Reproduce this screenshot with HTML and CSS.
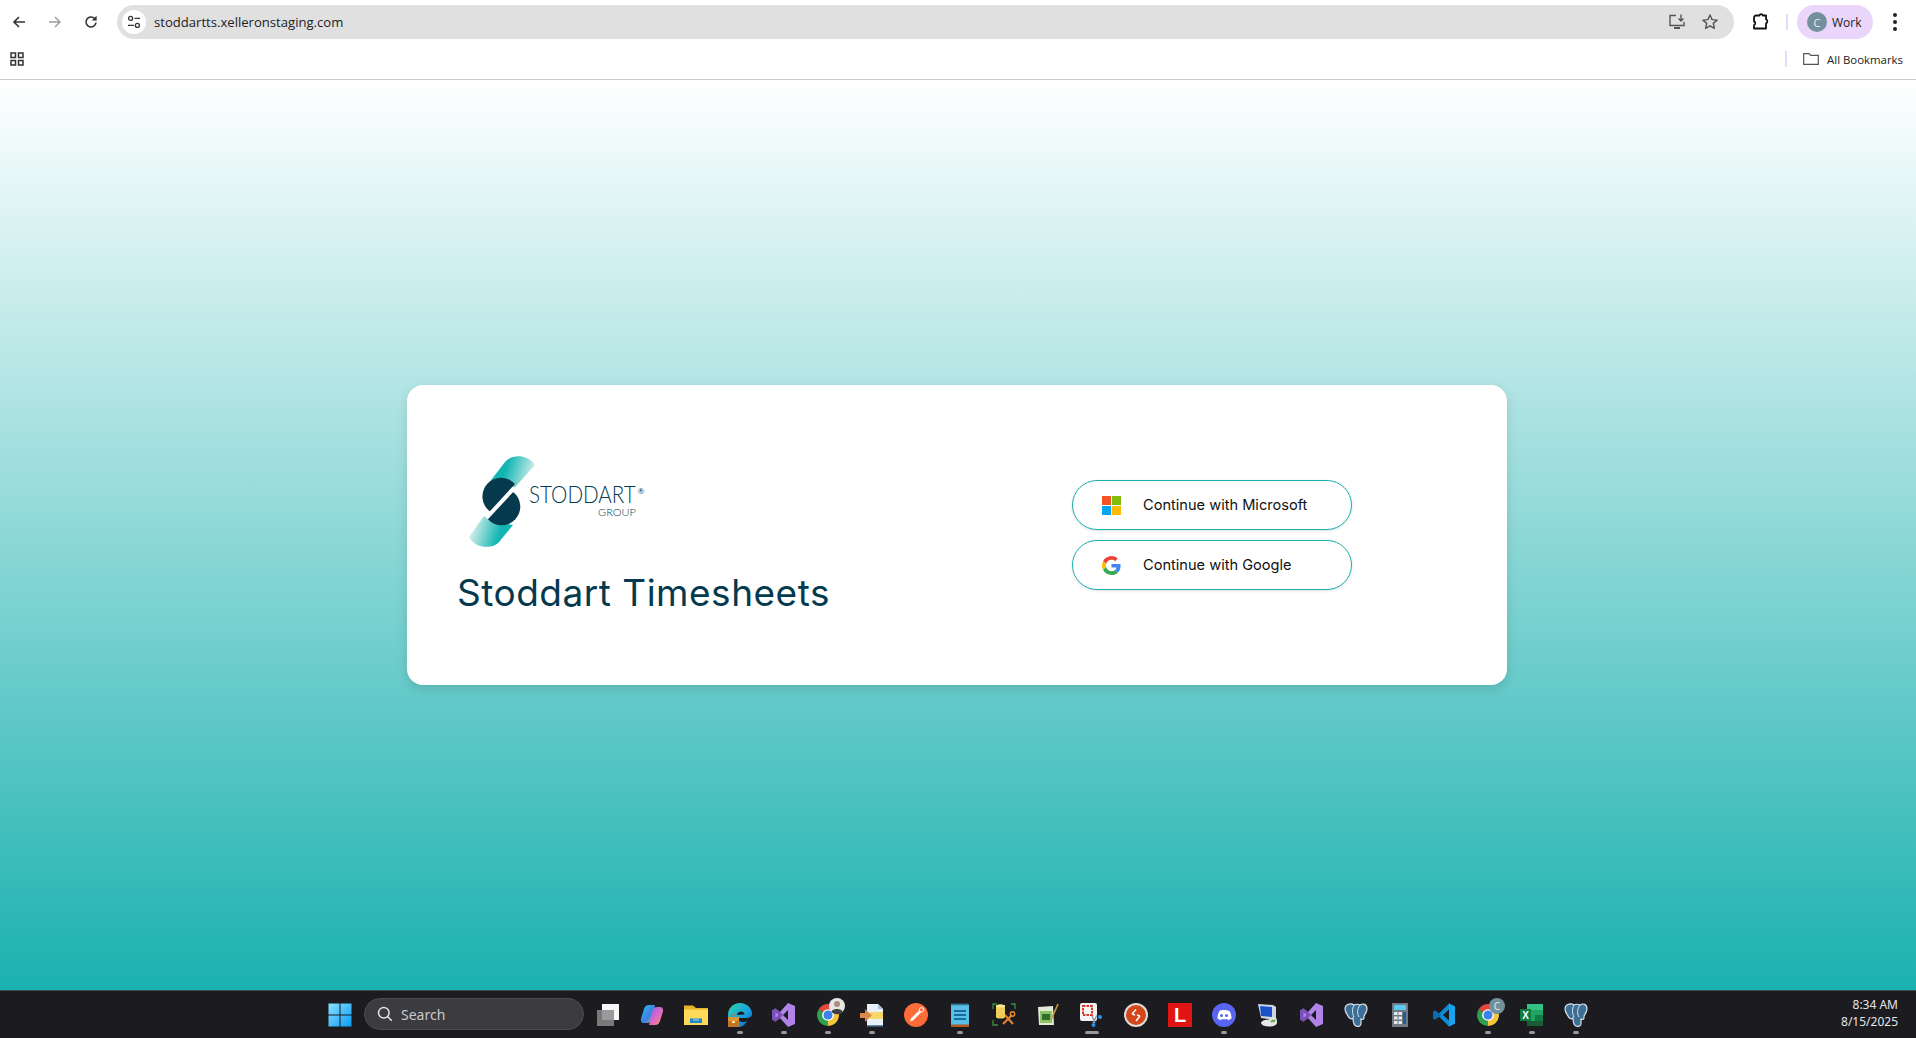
FILE: index.html
```html
<!DOCTYPE html>
<html lang="en">
<head>
    <meta charset="UTF-8">
    <meta name="viewport" content="width=device-width, initial-scale=1.0">
    <title>Stoddart Timesheets</title>
    <link rel="stylesheet" href="styles.css">
</head>
<body>
    <div class="toolbar">
        <button class="nav-btn nav-back"><svg width="16" height="16" viewBox="0 0 16 16"><path d="M14 8H3M8 3 3 8l5 5" fill="none" stroke="#333" stroke-width="1.6"/></svg></button>
        <button class="nav-btn nav-forward"><svg width="16" height="16" viewBox="0 0 16 16"><path d="M2 8h11M8 3l5 5-5 5" fill="none" stroke="#9a9a9a" stroke-width="1.4"/></svg></button>
        <button class="nav-btn nav-reload"><svg width="16" height="16" viewBox="0 0 16 16"><path d="M13 8.5A5 5 0 1 1 11.5 4.4L13 6" fill="none" stroke="#333" stroke-width="1.6"/><path d="M13.6 1.8v4.8H8.8z" fill="#333"/></svg></button>
        <div class="omnibox">
            <span class="site-chip"><svg width="14" height="14" viewBox="0 0 14 14"><circle cx="3.6" cy="3.4" r="2" fill="none" stroke="#333" stroke-width="1.3"/><path d="M7.5 3.4h5.5M1 10.4h6" stroke="#333" stroke-width="1.3"/><circle cx="10.4" cy="10.4" r="2" fill="none" stroke="#333" stroke-width="1.3"/></svg></span>
            <span class="url">stoddartts.xelleronstaging.com</span>
            <span class="omni-icons">
                <svg width="18" height="18" viewBox="0 0 18 18"><path d="M8 2.5H2v10h14V9" fill="none" stroke="#555" stroke-width="1.4"/><path d="M13 1.500v6M10.500 5.500 13 8l2.500-2.500" fill="none" stroke="#555" stroke-width="1.4"/><path d="M6 14h6v2H6z" fill="#555"/></svg>
                <svg width="18" height="18" viewBox="0 0 18 18"><path d="m9 2 2.100 4.600 5 .5-3.800 3.300 1.100 4.900L9 12.800l-4.400 2.500 1.100-4.900L1.900 7.100l5-.5z" fill="none" stroke="#555" stroke-width="1.400" stroke-linejoin="round"/></svg>
            </span>
        </div>
        <button class="nav-btn nav-ext"><svg width="18" height="18" viewBox="0 0 18 18"><path d="M5 2.500h3.500c.3-1.800 3-1.800 3.300 0H15v3.800c1.800.3 1.800 3.700 0 4V15.500H3v-3.300c1.700-.3 1.700-3.400 0-3.700V4.500c0-1 1-2 2-2z" fill="none" stroke="#111" stroke-width="1.800" stroke-linejoin="round"/></svg></button>
        <span class="divider"></span>
        <div class="profile"><span class="avatar">C</span><span>Work</span></div>
        <div class="menu-dots"><i></i><i></i><i></i></div>
    </div>

    <div class="bookmarks">
        <svg class="apps-icon" width="14" height="14" viewBox="0 0 14 14"><path d="M1 1h4.500v4.500H1zM8.500 1H13v4.500H8.500zM1 8.500h4.500V13H1zM8.500 8.500H13V13H8.500z" fill="none" stroke="#333" stroke-width="1.500"/></svg>
        <span class="divider"></span>
        <div class="all-bookmarks">
            <svg width="16" height="12" viewBox="0 0 16 12"><path d="M.7.7h5.500l1.500 1.600h7.600v9H.7z" fill="none" stroke="#555" stroke-width="1.200"/></svg>
            <span>All Bookmarks</span>
        </div>
    </div>

    <main class="page">
        <section class="card">
            <div class="brand">
                <svg class="logo" width="190" height="100" viewBox="60 60 570 300" role="img" aria-label="Stoddart Group logo">
                    <defs>
                        <linearGradient id="bandTop" x1="205" y1="100" x2="285" y2="125" gradientUnits="userSpaceOnUse"><stop offset="0" stop-color="#12b5b1"/><stop offset="1" stop-color="#d2eeec"/></linearGradient>
                        <linearGradient id="bandBottom" x1="95" y1="310" x2="175" y2="335" gradientUnits="userSpaceOnUse"><stop offset="0" stop-color="#d2eeec"/><stop offset="1" stop-color="#12b5b1"/></linearGradient>
                    </defs>
                    <path d="M150 158 198 96C215 74 265 70 288 105L228 172z" fill="url(#bandTop)"/>
                    <path d="M135 258 90 320C105 355 165 362 185 330L222 285 150 270z" fill="url(#bandBottom)"/>
                    <path d="M228 162A56 56 0 1 0 152.500 244z" fill="#05394e"/>
                    <path d="M222.500 186A56 56 0 1 1 146.700 268z" fill="#05394e"/>
                    <text class="logo-name" x="270" y="220" textLength="320" lengthAdjust="spacingAndGlyphs">STODDART</text>
                    <text class="logo-mark" x="596" y="192">®</text>
                    <text class="logo-group" x="477" y="257" textLength="114" lengthAdjust="spacingAndGlyphs">GROUP</text>
                </svg>
                <h1 class="app-title">Stoddart Timesheets</h1>
            </div>
            <div class="auth">
                <button class="auth-btn">
                    <svg class="auth-icon" width="19" height="19" viewBox="0 0 19 19"><path d="M0 0h9v9H0z" fill="#f35325"/><path d="M10 0h9v9h-9z" fill="#81bc06"/><path d="M0 10h9v9H0z" fill="#05a6f0"/><path d="M10 10h9v9h-9z" fill="#ffba08"/></svg>
                    <span>Continue with Microsoft</span>
                </button>
                <button class="auth-btn">
                    <svg class="auth-icon" width="19" height="19" viewBox="0 0 48 48"><path fill="#EA4335" d="M24 9.500c3.540 0 6.710 1.220 9.210 3.600l6.850-6.850C35.900 2.380 30.470 0 24 0 14.620 0 6.510 5.380 2.560 13.220l7.980 6.190C12.430 13.720 17.740 9.500 24 9.500z"/><path fill="#4285F4" d="M46.980 24.550c0-1.570-.15-3.090-.38-4.550H24v9.020h12.940c-.58 2.960-2.260 5.480-4.780 7.180l7.730 6c4.510-4.180 7.090-10.360 7.090-17.650z"/><path fill="#FBBC05" d="M10.530 28.590c-.48-1.450-.76-2.990-.76-4.590s.27-3.140.76-4.590l-7.980-6.190C.92 16.460 0 20.120 0 24c0 3.880.92 7.540 2.560 10.780l7.970-6.190z"/><path fill="#34A853" d="M24 48c6.480 0 11.930-2.130 15.890-5.810l-7.730-6c-2.150 1.450-4.920 2.300-8.160 2.300-6.260 0-11.570-4.220-13.470-9.910l-7.980 6.190C6.510 42.620 14.620 48 24 48z"/></svg>
                    <span>Continue with Google</span>
                </button>
            </div>
        </section>
    </main>

    <footer class="taskbar">
        <div class="task-start">
            <svg width="24" height="24" viewBox="0 0 24 24">
                <defs><linearGradient id="winBlue" x1="0" y1="0" x2="1" y2="1"><stop offset="0" stop-color="#8ae0ff"/><stop offset="1" stop-color="#0a9cf5"/></linearGradient></defs>
                <path d="M.5.500h11v11H.5zM12.500.500h11v11h-11zM.5 12.500h11v11H.5zM12.500 12.500h11v11h-11z" fill="url(#winBlue)"/>
            </svg>
        </div>
        <div class="search-box">
            <svg width="16" height="16" viewBox="0 0 16 16"><circle cx="6.800" cy="6.800" r="5.300" fill="none" stroke="#e4e4e4" stroke-width="1.500"/><path d="m10.800 10.800 4 4" stroke="#e4e4e4" stroke-width="1.500"/></svg>
            <span>Search</span>
        </div>
        <div class="task-icons">
            <div class="task-item"><svg width="24" height="24" viewBox="0 0 24 24"><path d="M6 1h17v16H6z" fill="#f7f7f7"/><path d="M1 7h17v16H1z" fill="#8a8a8a" fill-opacity=".85"/></svg><i class="no-dot"></i></div>
            <div class="task-item"><svg width="24" height="24" viewBox="0 0 24 24"><defs><linearGradient id="copA" x1="0" y1="0" x2="1" y2="1"><stop offset="0" stop-color="#27c1e8"/><stop offset=".6" stop-color="#3f7de8"/><stop offset="1" stop-color="#9ad24c"/></linearGradient><linearGradient id="copB" x1="0" y1="0" x2="1" y2="1"><stop offset="0" stop-color="#8d62e8"/><stop offset=".6" stop-color="#e56bc0"/><stop offset="1" stop-color="#f6a04d"/></linearGradient></defs><path d="M9 2h6l-3 13c-.8 3-2 5-5 5H4c-3 0-3.500-2.500-2.800-5L4 6c1-3 2.500-4 5-4z" fill="url(#copA)"/><path d="M15 22H9l3-13c.8-3 2-5 5-5h3c3 0 3.500 2.500 2.800 5L20 18c-1 3-2.500 4-5 4z" fill="url(#copB)"/></svg><i class="no-dot"></i></div>
            <div class="task-item"><svg width="24" height="24" viewBox="0 0 24 24"><path d="M0 2.500h9l3 2.500h12v17H0z" fill="#e8b32a"/><path d="M0 6.500h24V22H0z" fill="#fddc5c"/><path d="M6 15.500h12v4.500H6z" fill="#1d84c9"/><path d="M9 17h6" stroke="#8fd0f2" stroke-width="1.200"/></svg><i class="no-dot"></i></div>
            <div class="task-item"><svg width="24" height="24" viewBox="0 0 24 24"><defs><linearGradient id="edgeA" x1="0" y1="0" x2="1" y2="1"><stop offset="0" stop-color="#2bd6a8"/><stop offset=".6" stop-color="#1b9de2"/><stop offset="1" stop-color="#0c5da8"/></linearGradient></defs><path d="M12 0c7 0 12 5 12 11 0 3-3 4-6 4H9c.4 2.500 3 4 6 4 2 0 3-.5 4-1-2 4-5 6-8 6-6 0-11-5-11-12S5 0 12 0z" fill="url(#edgeA)"/><path d="M9 12c0-2 2-3.500 4-3.500s3.500 1 3.500 3z" fill="#1c1c22"/><path d="M0 14h11v10H0z" fill="#c0762a"/><path d="M0 14h11v4H0z" fill="#dd9233"/><path d="M4 18h3v2H4z" fill="#ffe18f"/><path d="M3.500 14v-2h4v2" fill="none" stroke="#c0762a"/></svg><i class="dot"></i></div>
            <div class="task-item"><svg width="24" height="24" viewBox="0 0 24 24"><path fill-rule="evenodd" d="M16 0l7 3v18l-7 3L8 15 3.500 18.500 0 16.500v-9l3.500-2L8 9zM16 7l-5 5 5 5z" fill="#b283e6"/><path d="M0 7.500l3.500-2L8 9l3 3-3 3-4.500 3.500-3.500-2zM3.500 9v6l3-3z" fill="#7a4fb8" fill-rule="evenodd"/></svg><i class="dot"></i></div>
            <div class="task-item chrome-photo"><svg class="icon-over" width="24" height="24" viewBox="0 0 24 24"><path d="M12 12 2.500 6.500a11 11 0 0 1 19 0z" fill="#e2483c"/><path d="M12 12l9.500-5.500A11 11 0 0 1 12 23z" fill="#f5c63b"/><path d="M12 12v11A11 11 0 0 1 2.500 6.500z" fill="#2fa04f"/><circle cx="12" cy="12" r="5.800" fill="#fff"/><circle cx="12" cy="12" r="4.500" fill="#3b82ed"/><circle cx="21" cy="3" r="8" fill="#e8e6e4"/><circle cx="21" cy="1" r="3" fill="#a88f7e"/><path d="M15.500 9c0-4 11-4 11 0a8 8 0 0 1-11 0z" fill="#3c3f44"/></svg><i class="dot"></i></div>
            <div class="task-item"><svg width="24" height="24" viewBox="0 0 24 24"><path d="M7 1h11l5 5v16H7z" fill="#e9f1f8"/><path d="M18 1v5h5z" fill="#9cc4e4"/><path d="M10 9h13v7H10z" fill="#f9d66a"/><path d="M7 22h16v1.500H7z" fill="#5d88ad"/><path d="M0 10h5V6l7 6.500L5 19v-4H0z" fill="#de8a46"/></svg><i class="dot"></i></div>
            <div class="task-item"><svg width="24" height="24" viewBox="0 0 24 24"><circle cx="12" cy="12" r="12" fill="#ff6c37"/><path d="M6 18.500l1-3 8-8 2 2-8 8z" fill="#fff"/><circle cx="17.500" cy="6.800" r="2.200" fill="none" stroke="#fff" stroke-width="1"/></svg><i class="no-dot"></i></div>
            <div class="task-item"><svg width="24" height="24" viewBox="0 0 24 24"><path d="M3 1.500h18V22H3z" fill="#59bfe6"/><path d="M3 21.500h18v2.500H3z" fill="#b05a22"/><path d="M6 7h12v2H6zM6 11h12v2H6zM6 15h12v2H6z" fill="#1a6c9c"/><path d="M4 0v3M7 0v3M10 0v3M13 0v3M16 0v3M19 0v3" stroke="#2f86b7"/></svg><i class="dot"></i></div>
            <div class="task-item"><svg width="24" height="24" viewBox="0 0 24 24"><path d="M4 3c0-2 9-2 9 0v11c0 2-9 2-9 0z" fill="#f2cd5c"/><ellipse cx="8.500" cy="3" rx="4.500" ry="1.500" fill="#fbe59b"/><path d="M1 6V1h4M19 1h4v5M1 17v5h5" fill="none" stroke="#3e8e41" stroke-width="1.300"/><path d="M11 21l9-9M13 12l8 9" stroke="#e8872b" stroke-width="2"/><circle cx="20.500" cy="11" r="2.200" fill="none" stroke="#e8872b" stroke-width="1.400"/></svg><i class="no-dot"></i></div>
            <div class="task-item"><svg width="24" height="24" viewBox="0 0 24 24"><path d="M2 4 17 3l1 19H3z" fill="#e3ead7"/><path d="M4 8h12v12H4z" fill="#8fc267"/><path d="M6 11h8v6H6z" fill="#2c6f2e"/><path d="M15 17 22 1" stroke="#c79a3b" stroke-width="1.600"/></svg><i class="no-dot"></i></div>
            <div class="task-item"><svg class="icon-over" width="24" height="24" viewBox="0 0 24 24"><rect x="0" y="0" width="17" height="18" rx="2" fill="#f4f4f4"/><path d="M3 3h9v9H3z" fill="none" stroke="#d9362c" stroke-width="2" stroke-dasharray="2.500 1"/><path d="M12 13l3 7M17 12l-4 8" stroke="#8a97a6" stroke-width="1.400"/><circle cx="20" cy="14" r="2" fill="#2f8fe0"/><circle cx="13.500" cy="22" r="2" fill="#2f8fe0"/></svg><i class="dot dot-wide"></i></div>
            <div class="task-item"><svg width="24" height="24" viewBox="0 0 24 24"><circle cx="12" cy="12" r="11" fill="#d4471b" stroke="#dcdcdc" stroke-width="2"/><path d="M12 6.500 8 11M8 11l3 1M16 13l-4 5M16 13l-3-1" stroke="#fff" stroke-width="1.500" fill="none"/></svg><i class="no-dot"></i></div>
            <div class="task-item"><span class="lm-icon">L</span><i class="no-dot"></i></div>
            <div class="task-item"><svg width="24" height="24" viewBox="0 0 24 24"><circle cx="12" cy="12" r="12" fill="#5865f2"/><path d="M6.500 8c3-1.500 8-1.500 11 0 1.500 2.500 2 5 2 7.500-1 .8-2.200 1.300-3.500 1.700l-.8-1.300c-2 .5-3.400.5-5.400 0l-.8 1.300c-1.300-.4-2.500-.9-3.500-1.700 0-2.500.5-5 2-7.500z" fill="#fff"/><circle cx="9.500" cy="12.500" r="1.500" fill="#5865f2"/><circle cx="14.500" cy="12.500" r="1.500" fill="#5865f2"/></svg><i class="dot"></i></div>
            <div class="task-item"><svg width="24" height="24" viewBox="0 0 24 24"><path d="M2 1 17 2l3 2v13L5 15z" fill="#cfd6e3"/><path d="M4 3l12 1v10L5 13z" fill="#1b52c9"/><ellipse cx="13" cy="20" rx="8" ry="3.500" fill="#e8e8e8"/><circle cx="17" cy="18" r="4" fill="#dfe7d8"/><path d="M15 19l2-2M19 17l-2 2" stroke="#3f9b46" stroke-width="1.200"/></svg><i class="no-dot"></i></div>
            <div class="task-item"><svg width="24" height="24" viewBox="0 0 24 24"><path fill-rule="evenodd" d="M16 0l7 3v18l-7 3L8 15 3.500 18.500 0 16.500v-9l3.500-2L8 9zM16 7l-5 5 5 5z" fill="#b283e6"/><path d="M0 7.500l3.500-2L8 9l3 3-3 3-4.500 3.500-3.500-2zM3.500 9v6l3-3z" fill="#7a4fb8" fill-rule="evenodd"/></svg><i class="no-dot"></i></div>
            <div class="task-item"><svg width="24" height="24" viewBox="0 0 24 24"><path d="M1 6c0-5 6-6 9-4 2-1 4-1 6 0 3-2 7-1 7 4 0 3-2 5-3 7v2c0 1-1 2-3 1v5c0 2-3 3-5 2s-3-4-3-8c-2 2-4 0-5-2S1 9 1 6z" fill="#3d6f96" stroke="#d7e3ec" stroke-width="1.200"/><path d="M10 2c-2 4-2 8 0 12M16 2c-3 4-3 9-1 12" fill="none" stroke="#d7e3ec"/></svg><i class="no-dot"></i></div>
            <div class="task-item"><svg width="24" height="24" viewBox="0 0 24 24"><path d="M4 0h16v24H4z" fill="#6f7a82"/><path d="M6 2h12v5H6z" fill="#5cc8ee"/><path d="M6 9h3.500v3H6zM10.500 9H14v3h-3.500zM6 13.500h3.500v3H6zM10.500 13.500H14v3h-3.500zM6 18h3.500v3H6zM10.500 18H14v3h-3.500z" fill="#e6e9ec"/><path d="M15 9h3v12h-3z" fill="#1f5f9e"/></svg><i class="no-dot"></i></div>
            <div class="task-item"><svg width="24" height="24" viewBox="0 0 24 24"><path fill-rule="evenodd" d="M17 .5l6 3v17l-6 3L7 13.500 3 16.500 1 15V9l2-1.500 4 3zM17 6.500 11 12l6 5.500z" fill="#0e8ad6"/><path d="M17 .5l6 3v17l-6 3z" fill="#1ba2ec"/><path d="M1 9l2-1.500 4 3 2.500 1.500-2.500 1.500-4 3L1 15z" fill="#0a6cb0"/></svg><i class="no-dot"></i></div>
            <div class="task-item"><svg class="icon-over" width="24" height="24" viewBox="0 0 24 24"><path d="M12 12 2.500 6.500a11 11 0 0 1 19 0z" fill="#e2483c"/><path d="M12 12l9.500-5.500A11 11 0 0 1 12 23z" fill="#f5c63b"/><path d="M12 12v11A11 11 0 0 1 2.500 6.500z" fill="#2fa04f"/><circle cx="12" cy="12" r="5.800" fill="#fff"/><circle cx="12" cy="12" r="4.500" fill="#3b82ed"/><circle cx="21" cy="3" r="8" fill="#75909d"/><text class="badge-letter" x="21" y="6.500">C</text></svg><i class="dot"></i></div>
            <div class="task-item"><svg width="24" height="24" viewBox="0 0 24 24"><path d="M7 1h16v22H7z" fill="#21a366"/><path d="M7 1h16v6H7z" fill="#33c481"/><path d="M15 12h8v6h-8z" fill="#107c41"/><path d="M7 18h16v5H7z" fill="#185c37"/><path d="M0 6h11v12H0z" fill="#0f7a40"/><text class="excel-letter" x="5.500" y="15.500">X</text></svg><i class="dot"></i></div>
            <div class="task-item"><svg width="24" height="24" viewBox="0 0 24 24"><path d="M1 6c0-5 6-6 9-4 2-1 4-1 6 0 3-2 7-1 7 4 0 3-2 5-3 7v2c0 1-1 2-3 1v5c0 2-3 3-5 2s-3-4-3-8c-2 2-4 0-5-2S1 9 1 6z" fill="#3d6f96" stroke="#d7e3ec" stroke-width="1.200"/><path d="M10 2c-2 4-2 8 0 12M16 2c-3 4-3 9-1 12" fill="none" stroke="#d7e3ec"/></svg><i class="dot"></i></div>
        </div>
        <div class="clock">
            <span>8:34 AM</span>
            <span>8/15/2025</span>
        </div>
    </footer>
</body>
</html>
```

FILE: styles.css
```css
* {
    box-sizing: border-box;
}

html, body {
    height: 100%;
}

body {
    margin: 0;
    display: flex;
    flex-direction: column;
    overflow: hidden;
    background: #fff;
    font-family: 'Open Sans', 'Noto Sans', sans-serif;
}

/* browser chrome */
.toolbar {
    height: 44px;
    flex: none;
    display: flex;
    align-items: center;
    background: #fff;
}

.nav-btn {
    flex: none;
    display: flex;
    align-items: center;
    justify-content: center;
    width: 34px;
    height: 34px;
    padding: 0;
    border: none;
    background: none;
}

.nav-back {
    margin-left: 2px;
}

.nav-forward {
    margin-left: 2px;
}

.nav-reload {
    margin-left: 2px;
    margin-right: 9px;
}

.omnibox {
    flex: 1;
    height: 34px;
    display: flex;
    align-items: center;
    padding-left: 5px;
    border-radius: 17px;
    background: #e0e0e0;
}

.site-chip {
    width: 24px;
    height: 24px;
    display: flex;
    align-items: center;
    justify-content: center;
    border-radius: 50%;
    background: #fff;
}

.url {
    margin-left: 8px;
    font-size: 13.1px;
    color: #222;
}

.omni-icons {
    margin-left: auto;
    display: flex;
    gap: 15px;
    padding-right: 15px;
}

.nav-ext {
    margin-left: 9px;
}

.divider {
    flex: none;
    width: 2px;
    height: 16px;
    background: #e8d8fb;
}

.toolbar .divider {
    margin-left: 9px;
}

.profile {
    flex: none;
    width: 76px;
    height: 34px;
    margin-left: 9px;
    display: flex;
    align-items: center;
    gap: 5px;
    padding-left: 10px;
    border-radius: 17px;
    background: #ead6fb;
    font-size: 12px;
    color: #222;
}

.avatar {
    width: 20px;
    height: 20px;
    display: flex;
    align-items: center;
    justify-content: center;
    border-radius: 50%;
    background: #75909d;
    color: #e8eef0;
    font-size: 11px;
}

.menu-dots {
    flex: none;
    width: 43px;
    display: flex;
    flex-direction: column;
    align-items: center;
    gap: 3px;
}

.menu-dots i {
    width: 4px;
    height: 4px;
    border-radius: 50%;
    background: #222;
}

.bookmarks {
    height: 36px;
    flex: none;
    display: flex;
    align-items: center;
    padding: 0 13px 5px 10px;
    border-bottom: 1px solid #c9c9c9;
    background: #fff;
}

.bookmarks .divider {
    margin-left: auto;
}

.all-bookmarks {
    display: flex;
    align-items: center;
    gap: 8px;
    margin-left: 16px;
    font-size: 11.4px;
    color: #222;
}

/* login page */
.page {
    flex: 1;
    display: flex;
    align-items: center;
    justify-content: center;
    padding-right: 2px;
    background: linear-gradient(to bottom, #fff, #1ab1af);
}

.card {
    width: 1100px;
    height: 300px;
    display: grid;
    grid-template-columns: 1fr 280px;
    align-items: center;
    padding: 0 155px 0 50px;
    border-radius: 16px;
    background: #fff;
    box-shadow: 0 4px 12px rgba(0, 0, 0, 0.12);
}

.brand {
    padding-bottom: 4px;
}

.logo {
    display: block;
    margin-left: 2px;
    overflow: visible;
}

.logo-name {
    font-family: 'Lato', sans-serif;
    font-size: 68px;
    font-weight: 300;
    fill: #05394e;
}

.logo-mark {
    font-family: 'Lato', sans-serif;
    font-size: 24px;
    fill: #05394e;
}

.logo-group {
    font-family: 'Lato', sans-serif;
    font-size: 31px;
    font-weight: 300;
    fill: #05394e;
}

.app-title {
    margin: 19px 0 0;
    font-family: 'Inter', sans-serif;
    font-size: 37px;
    font-weight: 400;
    letter-spacing: 0.5px;
    line-height: 48px;
    color: #05394e;
}

.auth {
    display: flex;
    flex-direction: column;
    gap: 10px;
}

.auth-btn {
    width: 280px;
    height: 50px;
    display: flex;
    align-items: center;
    padding: 0 0 0 29px;
    border: 1.5px solid #1ab1af;
    border-radius: 25px;
    background: #fff;
    box-shadow: 0 1px 3px rgba(0, 0, 0, 0.12);
    font-family: 'Inter', sans-serif;
    font-size: 14.6px;
    color: #111;
}

.auth-icon {
    margin-right: 22px;
}

/* windows taskbar */
.taskbar {
    height: 48px;
    flex: none;
    display: flex;
    align-items: flex-start;
    padding-left: 318px;
    border-top: 1px solid #3c4a4a;
    background: #1b1b20;
}

.task-start {
    width: 44px;
    display: flex;
    justify-content: center;
    padding-top: 12px;
}

.search-box {
    width: 220px;
    height: 32px;
    margin: 7px 2px 0;
    display: flex;
    align-items: center;
    gap: 8px;
    padding-left: 12px;
    border: 1px solid #4b4b50;
    border-radius: 16px;
    background: #3b3b40;
    font-family: 'Noto Sans', sans-serif;
    font-size: 14px;
    color: #c9c9c9;
}

.task-icons {
    display: flex;
}

.task-item {
    width: 44px;
    display: flex;
    flex-direction: column;
    align-items: center;
    padding-top: 12px;
}

.task-item svg {
    display: block;
}

.icon-over {
    overflow: visible;
}

.dot, .no-dot {
    width: 6px;
    height: 3px;
    margin-top: 4px;
    border-radius: 2px;
}

.dot {
    background: #9a9a9a;
}

.dot-wide {
    width: 14px;
}

.lm-icon {
    width: 24px;
    height: 24px;
    display: flex;
    align-items: center;
    justify-content: center;
    background: #e11414;
    font-family: 'Liberation Sans', sans-serif;
    font-size: 20px;
    font-weight: 700;
    color: #fff;
}

.badge-letter {
    font-family: 'Noto Sans', sans-serif;
    font-size: 10px;
    text-anchor: middle;
    fill: #dfe6ea;
}

.excel-letter {
    font-family: 'Liberation Sans', sans-serif;
    font-size: 10px;
    font-weight: 700;
    text-anchor: middle;
    fill: #fff;
}

.clock {
    margin-left: auto;
    padding: 6px 18px 0 0;
    display: flex;
    flex-direction: column;
    align-items: flex-end;
    gap: 1px;
    font-family: 'Noto Sans', sans-serif;
    font-size: 12px;
    line-height: 16px;
    color: #e6e6e6;
}
```
